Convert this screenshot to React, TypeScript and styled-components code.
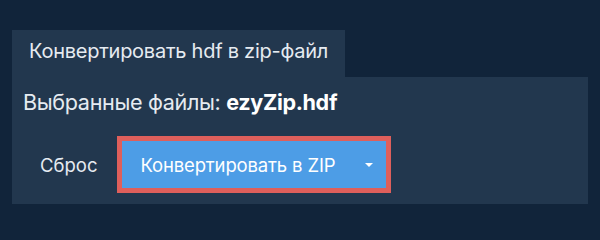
import React from "react";
import styled, { createGlobalStyle } from "styled-components";

const Global = createGlobalStyle`
  html, body { margin: 0; padding: 0; background: #11243a; }
  body { font-family: Inter, "Noto Sans", sans-serif; color: #e9eef4; }
`;

const Page = styled.div`
  width: 600px;
  height: 230px;
  box-sizing: border-box;
  padding: 30px 12px 0 12px;
  background: #11243a;
`;

const Tab = styled.div`
  display: inline-block;
  height: 47px;
  box-sizing: border-box;
  padding: 0 17px 0 17px;
  line-height: 42px;
  font-size: 20px;
  background: #22374e;
  color: #e6ebf1;
  letter-spacing: -0.25px;
`;

const Panel = styled.div`
  width: 576px;
  height: 127px;
  box-sizing: border-box;
  background: #22374e;
  padding: 10px 11px 0 11px;
  display: flex;
  flex-direction: column;
`;

const Files = styled.div`
  font-size: 21.6px;
  line-height: 30px;
  color: #e6ebf1;
  letter-spacing: -0.35px;
  b { font-weight: 700; color: #ffffff; }
`;

const Row = styled.div`
  display: flex;
  align-items: center;
  margin-top: 19px;
  padding-left: 17px;
  gap: 20px;
`;

const Reset = styled.button`
  background: none;
  border: none;
  padding: 0;
  font-family: inherit;
  font-size: 18.5px;
  color: #e6ebf1;
  cursor: pointer;
`;

const Convert = styled.button`
  display: flex;
  align-items: center;
  box-sizing: border-box;
  width: 274px;
  height: 57px;
  border: 5px solid #df5f5b;
  background: #4d9de6;
  padding: 0 13px 0 18px;
  font-family: inherit;
  font-size: 18.5px;
  color: #ffffff;
  cursor: pointer;
`;

const Label = styled.span`
  flex: 1;
  text-align: left;
  letter-spacing: -0.15px;
`;

const Caret = styled.span`
  width: 0;
  height: 0;
  border-left: 4px solid transparent;
  border-right: 4px solid transparent;
  border-top: 4px solid #ffffff;
`;

export default function App() {
  return (
    <>
      <Global />
      <Page>
        <Tab>Конвертировать hdf в zip-файл</Tab>
        <Panel>
          <Files>
            Выбранные файлы: <b>ezyZip.hdf</b>
          </Files>
          <Row>
            <Reset>Сброс</Reset>
            <Convert>
              <Label>Конвертировать в ZIP</Label>
              <Caret />
            </Convert>
          </Row>
        </Panel>
      </Page>
    </>
  );
}
